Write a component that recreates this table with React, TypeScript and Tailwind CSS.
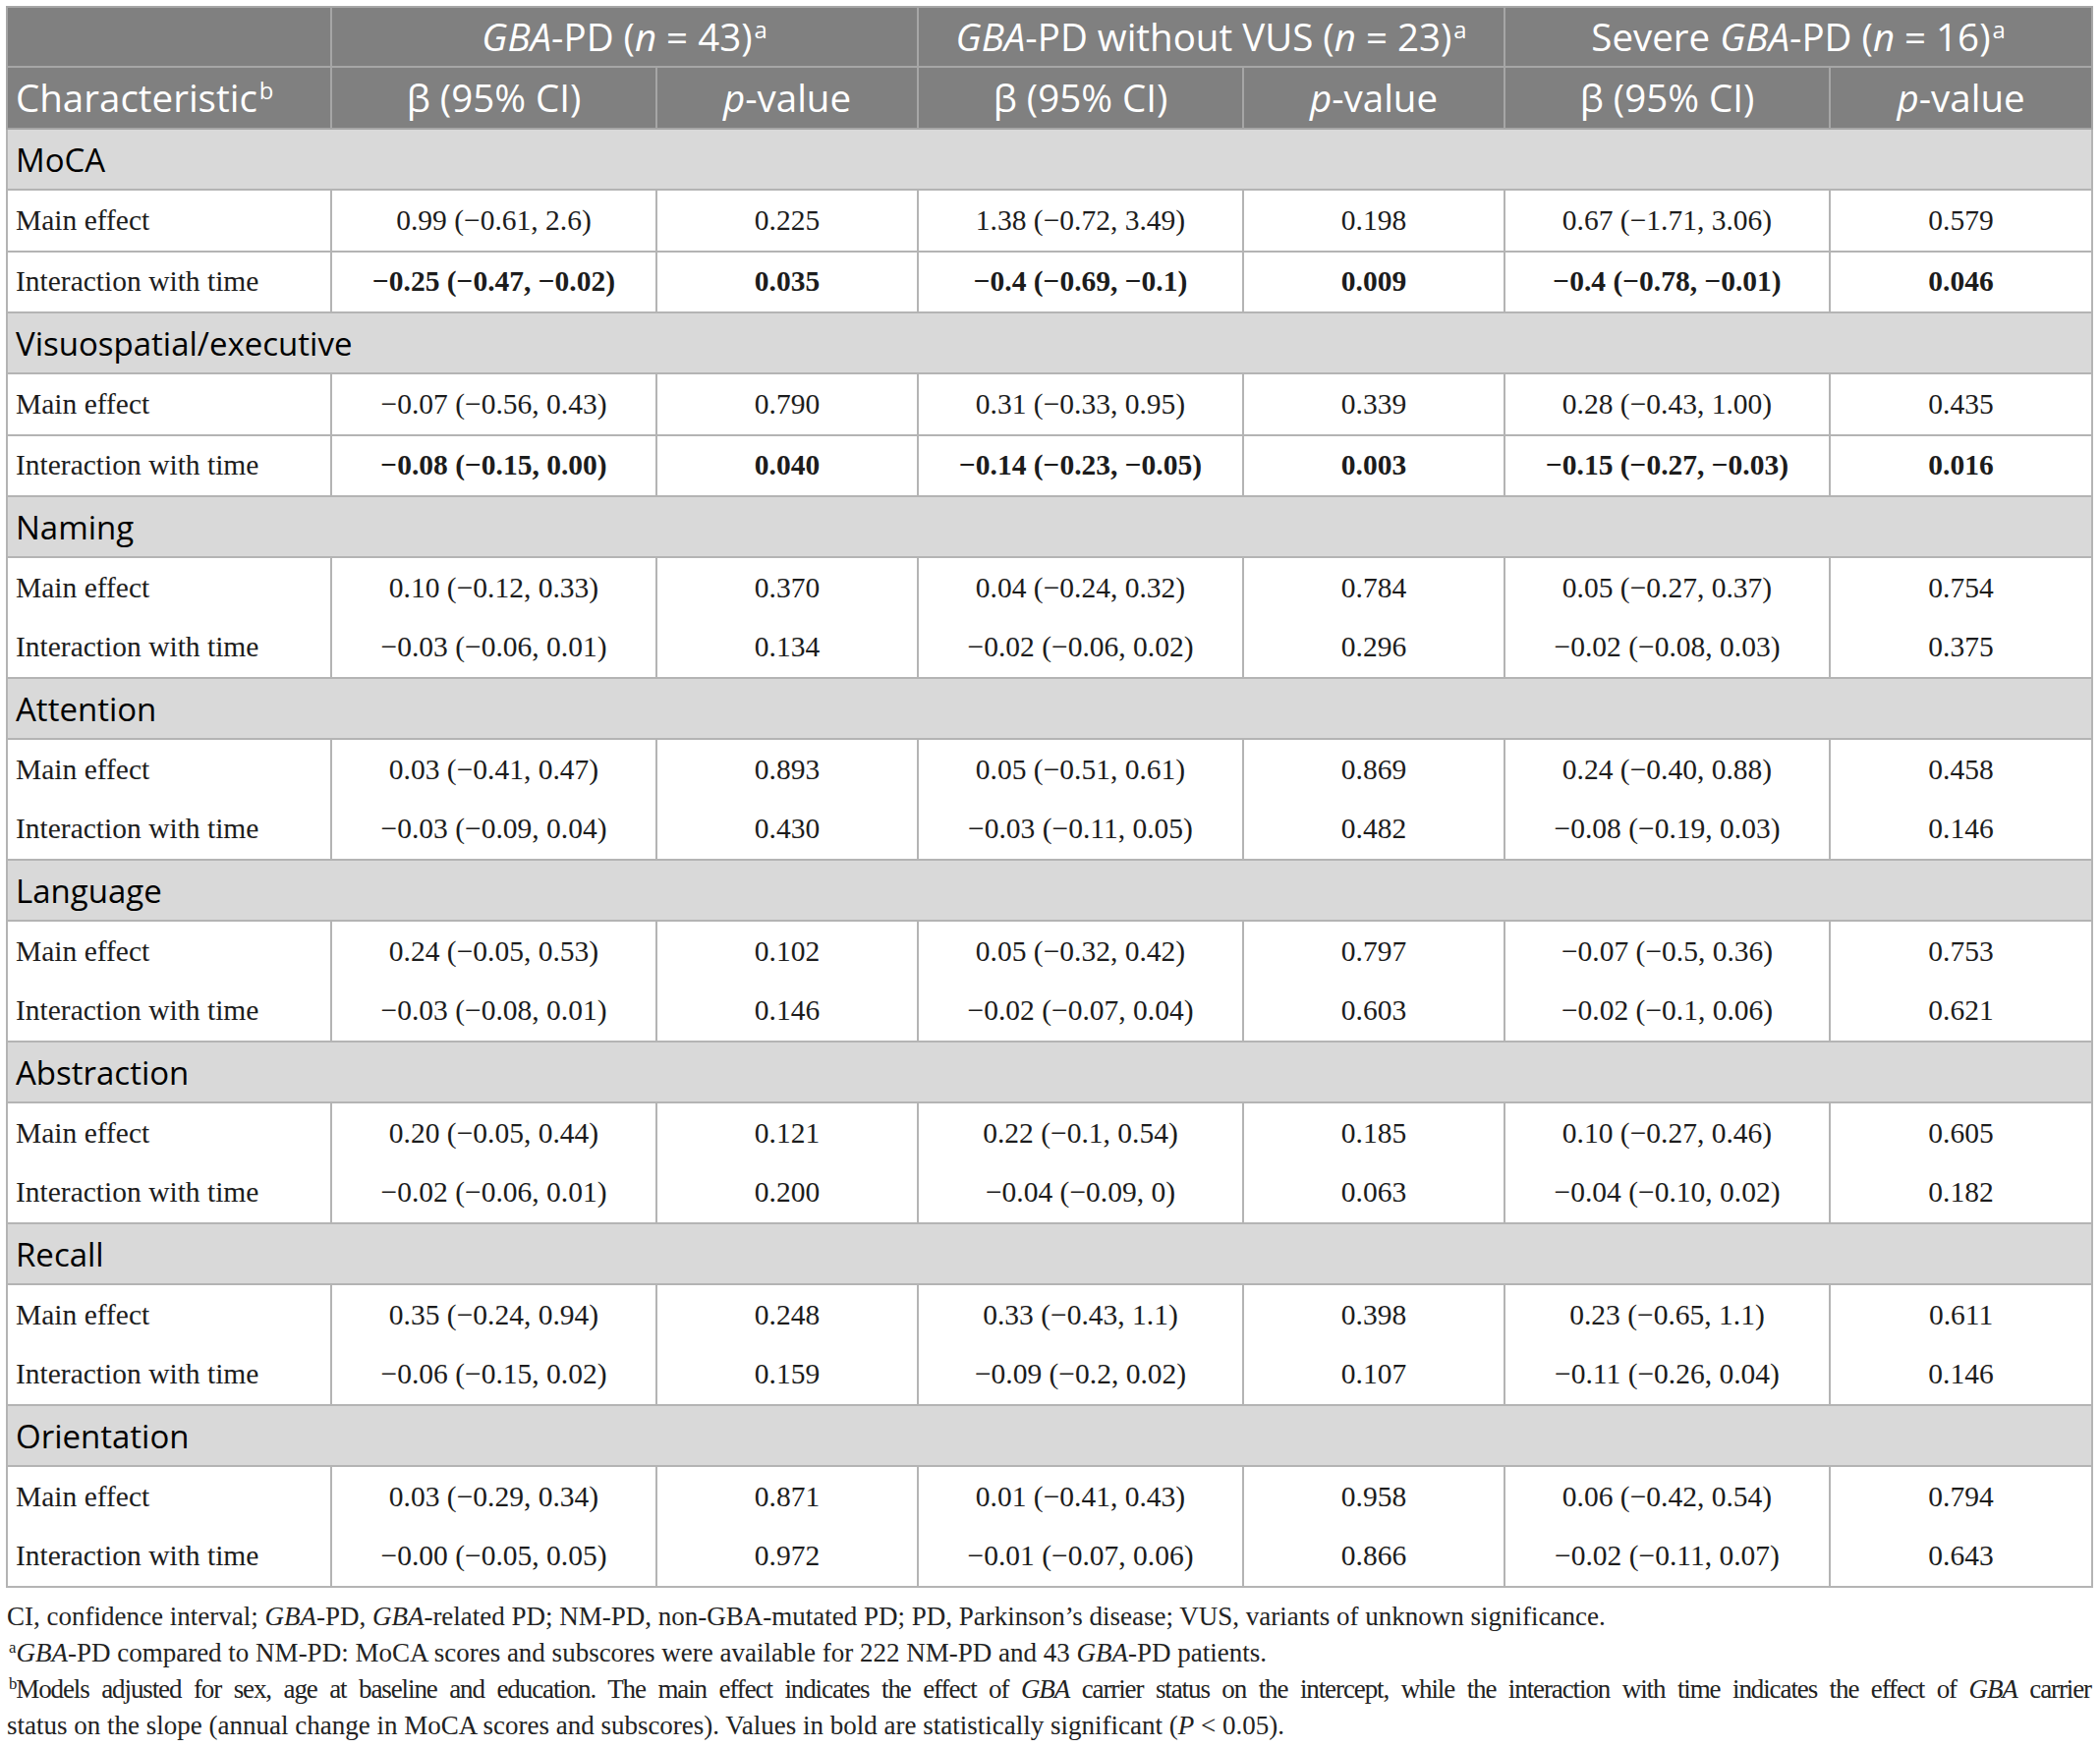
import React from 'react'

type Vals = [string, string, string, string, string, string]

interface Block {
  name: string
  main: Vals
  inter: Vals
  // MoCA and visuospatial rows are split into two bordered rows with bold interaction values
  split?: boolean
}

const blocks: Block[] = [
  {
    name: 'MoCA',
    split: true,
    main: ['0.99 (−0.61, 2.6)', '0.225', '1.38 (−0.72, 3.49)', '0.198', '0.67 (−1.71, 3.06)', '0.579'],
    inter: ['−0.25 (−0.47, −0.02)', '0.035', '−0.4 (−0.69, −0.1)', '0.009', '−0.4 (−0.78, −0.01)', '0.046'],
  },
  {
    name: 'Visuospatial/executive',
    split: true,
    main: ['−0.07 (−0.56, 0.43)', '0.790', '0.31 (−0.33, 0.95)', '0.339', '0.28 (−0.43, 1.00)', '0.435'],
    inter: ['−0.08 (−0.15, 0.00)', '0.040', '−0.14 (−0.23, −0.05)', '0.003', '−0.15 (−0.27, −0.03)', '0.016'],
  },
  {
    name: 'Naming',
    main: ['0.10 (−0.12, 0.33)', '0.370', '0.04 (−0.24, 0.32)', '0.784', '0.05 (−0.27, 0.37)', '0.754'],
    inter: ['−0.03 (−0.06, 0.01)', '0.134', '−0.02 (−0.06, 0.02)', '0.296', '−0.02 (−0.08, 0.03)', '0.375'],
  },
  {
    name: 'Attention',
    main: ['0.03 (−0.41, 0.47)', '0.893', '0.05 (−0.51, 0.61)', '0.869', '0.24 (−0.40, 0.88)', '0.458'],
    inter: ['−0.03 (−0.09, 0.04)', '0.430', '−0.03 (−0.11, 0.05)', '0.482', '−0.08 (−0.19, 0.03)', '0.146'],
  },
  {
    name: 'Language',
    main: ['0.24 (−0.05, 0.53)', '0.102', '0.05 (−0.32, 0.42)', '0.797', '−0.07 (−0.5, 0.36)', '0.753'],
    inter: ['−0.03 (−0.08, 0.01)', '0.146', '−0.02 (−0.07, 0.04)', '0.603', '−0.02 (−0.1, 0.06)', '0.621'],
  },
  {
    name: 'Abstraction',
    main: ['0.20 (−0.05, 0.44)', '0.121', '0.22 (−0.1, 0.54)', '0.185', '0.10 (−0.27, 0.46)', '0.605'],
    inter: ['−0.02 (−0.06, 0.01)', '0.200', '−0.04 (−0.09, 0)', '0.063', '−0.04 (−0.10, 0.02)', '0.182'],
  },
  {
    name: 'Recall',
    main: ['0.35 (−0.24, 0.94)', '0.248', '0.33 (−0.43, 1.1)', '0.398', '0.23 (−0.65, 1.1)', '0.611'],
    inter: ['−0.06 (−0.15, 0.02)', '0.159', '−0.09 (−0.2, 0.02)', '0.107', '−0.11 (−0.26, 0.04)', '0.146'],
  },
  {
    name: 'Orientation',
    main: ['0.03 (−0.29, 0.34)', '0.871', '0.01 (−0.41, 0.43)', '0.958', '0.06 (−0.42, 0.54)', '0.794'],
    inter: ['−0.00 (−0.05, 0.05)', '0.972', '−0.01 (−0.07, 0.06)', '0.866', '−0.02 (−0.11, 0.07)', '0.643'],
  },
]

const headCell = 'border-2 border-[#a6a6a6] bg-[#808080] text-white font-normal'
const bodyCell = 'border-2 border-[#b4b4b4] p-0 text-center align-middle'
const firstCell = 'border-2 border-[#b4b4b4] p-0 pl-[8px] text-left align-middle'

function Sup({ children }: { children: React.ReactNode }) {
  return <span className="relative -top-[0.55em] ml-[2px] align-baseline text-[0.62em] leading-none">{children}</span>
}

function GroupHead({ pre, main, n }: { pre?: string; main: string; n: string }) {
  return (
    <th colSpan={2} className={`${headCell} text-center`}>
      {pre}
      <i>GBA</i>-PD{main} (<i>n</i> = {n})<Sup>a</Sup>
    </th>
  )
}

function SplitRow({ label, vals, bold }: { label: string; vals: Vals; bold?: boolean }) {
  return (
    <tr className="h-[62.5px]">
      <td className={firstCell}>{label}</td>
      {vals.map((v, i) => (
        <td key={i} className={`${bodyCell} ${bold ? 'font-bold' : ''}`}>
          {v}
        </td>
      ))}
    </tr>
  )
}

function PairRow({ main, inter }: { main: Vals; inter: Vals }) {
  return (
    <tr>
      <td className={firstCell}>
        <div className="flex h-[60.5px] items-center">Main effect</div>
        <div className="flex h-[60.5px] items-center">Interaction with time</div>
      </td>
      {main.map((v, i) => (
        <td key={i} className={bodyCell}>
          <div className="flex h-[60.5px] items-center justify-center">{v}</div>
          <div className="flex h-[60.5px] items-center justify-center">{inter[i]}</div>
        </td>
      ))}
    </tr>
  )
}

export default function App() {
  return (
    <div className="min-h-screen bg-white pt-[6px] pl-[6px] text-[#1c1c1c]">
      <table className="w-[2122px] table-fixed border-collapse border-2 border-[#a6a6a6] font-['Liberation_Serif',serif] text-[29.5px] leading-none">
        <colgroup>
          <col className="w-[330px]" />
          <col className="w-[331px]" />
          <col className="w-[266px]" />
          <col className="w-[331px]" />
          <col className="w-[266px]" />
          <col className="w-[331px]" />
          <col className="w-[267px]" />
        </colgroup>
        <thead className="font-['Open_Sans',sans-serif] text-[38.5px]">
          <tr className="h-[61px]">
            <th className={headCell} />
            <GroupHead main="" n="43" />
            <GroupHead main=" without VUS" n="23" />
            <GroupHead pre="Severe " main="" n="16" />
          </tr>
          <tr className="h-[63px]">
            <th className={`${headCell} pl-[8px] text-left`}>
              Characteristic<Sup>b</Sup>
            </th>
            {[0, 1, 2].map((k) => (
              <React.Fragment key={k}>
                <th className={`${headCell} text-center`}>β (95% CI)</th>
                <th className={`${headCell} text-center`}>
                  <i>p</i>-value
                </th>
              </React.Fragment>
            ))}
          </tr>
        </thead>
        <tbody>
          {blocks.map((b) => (
            <React.Fragment key={b.name}>
              <tr className="h-[62px]">
                <td
                  colSpan={7}
                  className="border-2 border-[#b4b4b4] bg-[#d9d9d9] pl-[8px] font-['Open_Sans',sans-serif] text-[33px] text-black"
                >
                  {b.name}
                </td>
              </tr>
              {b.split ? (
                <>
                  <SplitRow label="Main effect" vals={b.main} />
                  <SplitRow label="Interaction with time" vals={b.inter} bold />
                </>
              ) : (
                <PairRow main={b.main} inter={b.inter} />
              )}
            </React.Fragment>
          ))}
        </tbody>
      </table>

      {/* Footnotes */}
      <div className="mt-[11px] w-[2122px] pl-[1px] font-['Liberation_Serif',serif] text-[27px] leading-[37px] text-[#222]">
        <p>
          CI, confidence interval; <i>GBA</i>-PD, <i>GBA</i>-related PD; NM-PD, non-GBA-mutated PD; PD, Parkinson’s
          disease; VUS, variants of unknown significance.
        </p>
        <p>
          <Sup>a</Sup>
          <i>GBA</i>-PD compared to NM-PD: MoCA scores and subscores were available for 222 NM-PD and 43 <i>GBA</i>-PD
          patients.
        </p>
        <p className="text-justify tracking-[-1.1px] [text-align-last:justify] [word-spacing:-2px]">
          <Sup>b</Sup>Models adjusted for sex, age at baseline and education. The main effect indicates the effect of{' '}
          <i>GBA</i> carrier status on the intercept, while the interaction with time indicates the effect of <i>GBA</i>{' '}
          carrier
        </p>
        <p>
          status on the slope (annual change in MoCA scores and subscores). Values in bold are statistically significant
          (<i>P</i> &lt; 0.05).
        </p>
      </div>
    </div>
  )
}
